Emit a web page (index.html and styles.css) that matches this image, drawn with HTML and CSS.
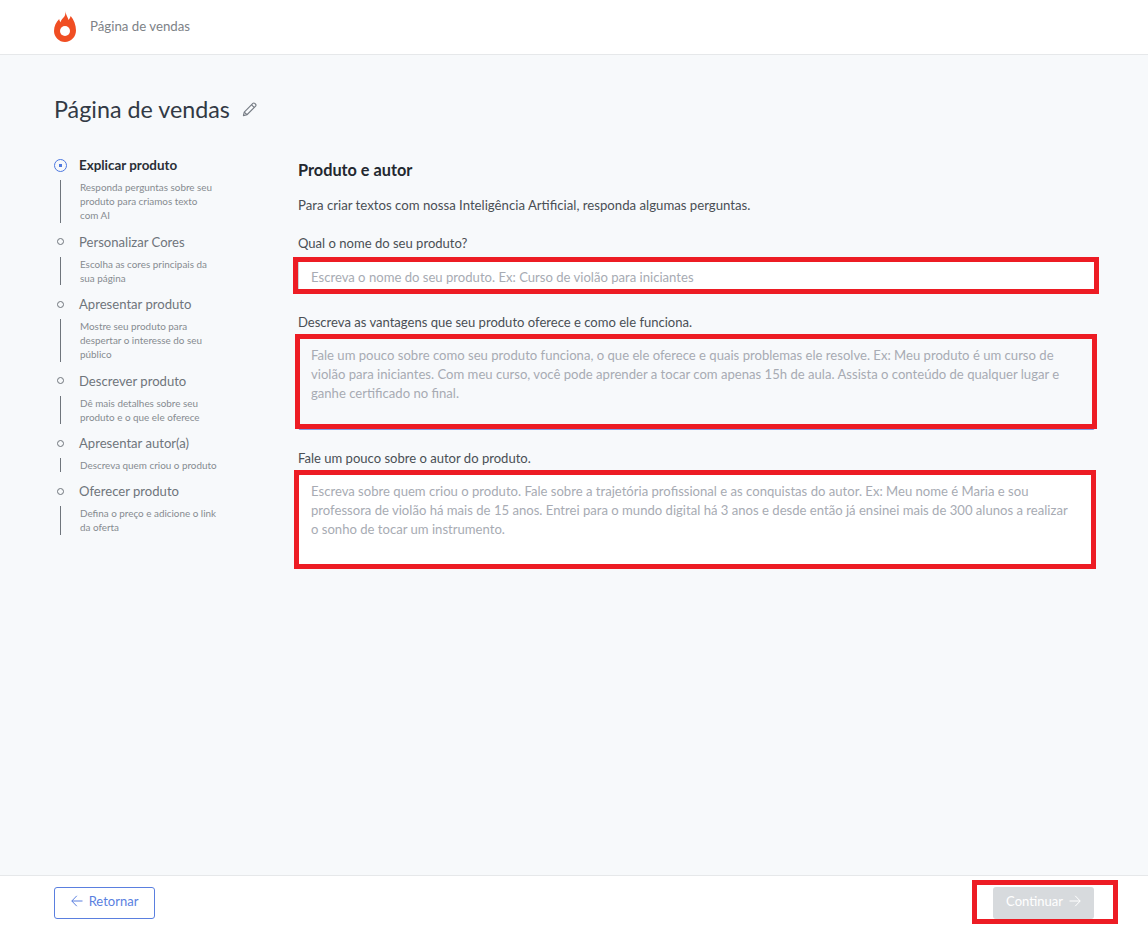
FILE: index.html
```html
<!DOCTYPE html>
<html lang="pt-BR">
<head>
<meta charset="utf-8">
<title>Página de vendas</title>
<link rel="stylesheet" href="styles.css">
</head>
<body>
<div class="page">
  <header class="topbar">
    <svg class="logo" viewBox="0 0 22 31" width="22" height="31" aria-hidden="true">
      <path fill="#f04e23" d="M11 0C12 3.500 13.800 6.500 14.600 9 15.600 7.800 16.400 6.400 16.700 5 19.800 8.600 22 13.800 22 19.600 22 26 17 31 11 31 5 31 0 26 0 20 0 15 2.200 11 5.200 8 5.400 9.400 5.800 10.400 6.400 11.200 7.200 8.600 9 7.500 10.400 5.600 11.400 4 11.600 2 11 0Z"/>
      <circle cx="11" cy="20" r="5" fill="#fff"/>
    </svg>
    <span class="topbar-title">Página de vendas</span>
  </header>

  <main class="main">
    <div class="title-row">
      <h1 class="title">Página de vendas</h1>
      <svg class="pencil" viewBox="0 0 16 16" width="15" height="15" fill="none" stroke="#767c84" stroke-width="1.200" stroke-linejoin="round" aria-hidden="true">
        <path d="M1.500 14.500l.9-3.800L11.600 1.500a1.400 1.400 0 0 1 2 0l.9.900a1.400 1.400 0 0 1 0 2L5.300 13.600z"/>
        <path d="M10.200 3l2.800 2.800M2.400 10.700l2.900 2.900"/>
      </svg>
    </div>

    <div class="columns">
      <ol class="steps">
        <li class="step step-active">
          <div class="step-head"><span class="dot"></span><span class="step-name">Explicar produto</span></div>
          <p class="step-desc">Responda perguntas sobre seu<br>produto para criamos texto<br>com AI</p>
        </li>
        <li class="step">
          <div class="step-head"><span class="dot"></span><span class="step-name">Personalizar Cores</span></div>
          <p class="step-desc">Escolha as cores principais da<br>sua página</p>
        </li>
        <li class="step">
          <div class="step-head"><span class="dot"></span><span class="step-name">Apresentar produto</span></div>
          <p class="step-desc">Mostre seu produto para<br>despertar o interesse do seu<br>público</p>
        </li>
        <li class="step">
          <div class="step-head"><span class="dot"></span><span class="step-name">Descrever produto</span></div>
          <p class="step-desc">Dê mais detalhes sobre seu<br>produto e o que ele oferece</p>
        </li>
        <li class="step">
          <div class="step-head"><span class="dot"></span><span class="step-name">Apresentar autor(a)</span></div>
          <p class="step-desc">Descreva quem criou o produto</p>
        </li>
        <li class="step">
          <div class="step-head"><span class="dot"></span><span class="step-name">Oferecer produto</span></div>
          <p class="step-desc">Defina o preço e adicione o link<br>da oferta</p>
        </li>
      </ol>

      <section class="form">
        <h2 class="form-title">Produto e autor</h2>
        <p class="form-intro">Para criar textos com nossa Inteligência Artificial, responda algumas perguntas.</p>

        <div class="field">
          <div class="label">Qual o nome do seu produto?</div>
          <div class="control control-input">Escreva o nome do seu produto. Ex: Curso de violão para iniciantes<span class="mark mark-name"></span></div>
        </div>

        <div class="field">
          <div class="label">Descreva as vantagens que seu produto oferece e como ele funciona.</div>
          <div class="control control-area control-focus">Fale um pouco sobre como seu produto funciona, o que ele oferece e quais problemas ele resolve. Ex: Meu produto é um curso de<br>violão para iniciantes. Com meu curso, você pode aprender a tocar com apenas 15h de aula. Assista o conteúdo de qualquer lugar e<br>ganhe certificado no final.<span class="mark mark-about"></span></div>
        </div>

        <div class="field">
          <div class="label">Fale um pouco sobre o autor do produto.</div>
          <div class="control control-area">Escreva sobre quem criou o produto. Fale sobre a trajetória profissional e as conquistas do autor. Ex: Meu nome é Maria e sou<br>professora de violão há mais de 15 anos. Entrei para o mundo digital há 3 anos e desde então já ensinei mais de 300 alunos a realizar<br>o sonho de tocar um instrumento.<span class="mark mark-author"></span></div>
        </div>
      </section>
    </div>
  </main>

  <footer class="bottombar">
    <button class="btn btn-back" type="button">
      <svg viewBox="0 0 12 12" width="12" height="12" fill="none" stroke="currentColor" stroke-width="1" aria-hidden="true"><path d="M11.500 6H.8M5.800 .8L.8 6l5 5.200"/></svg>
      <span>Retornar</span>
    </button>
    <button class="btn btn-next" type="button">
      <span>Continuar</span>
      <svg viewBox="0 0 12 12" width="12" height="12" fill="none" stroke="currentColor" stroke-width="1" aria-hidden="true"><path d="M.5 6h10.700M6.200 .8l5 5.200-5 5.200"/></svg>
      <span class="mark mark-next"></span>
    </button>
  </footer>
</div>
</body>
</html>
```

FILE: styles.css
```css
* { box-sizing: border-box; }
html, body { margin: 0; height: 100%; }
body {
  font-family: Lato, "Noto Sans", sans-serif;
  color: #343a40;
  background: #f7f9fb;
}
.page { display: flex; flex-direction: column; height: 926px; overflow: hidden; }

.topbar {
  flex: none;
  height: 55px;
  padding: 0 54px;
  display: flex;
  align-items: center;
  gap: 14px;
  background: #fff;
  border-bottom: 1px solid #e6e8ea;
}
.logo { display: block; margin-top: -1px; }
.topbar-title { font-size: 13.250px; color: #7d8287; margin-top: -2px; }

.main { flex: 1; padding: 0 54px; min-height: 0; }
.title-row { display: flex; align-items: center; gap: 12px; height: 40px; margin-top: 34px; }
.title { margin: 0; font-size: 23.300px; font-weight: 400; color: #323a45; }
.columns { display: grid; grid-template-columns: 244px 1fr; margin-top: 21px; }

.steps { list-style: none; margin: 0; padding: 0; }
.step { margin-bottom: 4px; }
.step-head { display: flex; align-items: center; height: 30px; gap: 12px; }
.dot {
  flex: none;
  width: 7px;
  height: 7px;
  margin: 0 3px;
  border: 1.300px solid #6f757c;
  border-radius: 50%;
}
.step-name { font-size: 13.100px; color: #6f757c; }
.step-desc {
  margin: 0 0 0 6px;
  padding-left: 19px;
  border-left: 1px solid #6f757c;
  font-size: 9.900px;
  line-height: 14.200px;
  color: #868b90;
  white-space: nowrap;
}
.step-active .step-name { font-size: 13.400px; font-weight: 700; color: #2b2f36; }
.step-active .dot {
  width: 13px;
  height: 13px;
  margin: 0;
  border: 1px solid #4d78e0;
  background: radial-gradient(circle, #4d78e0 0 1.500px, transparent 2px);
}

.form { min-width: 0; }
.form-title { margin: 10px 0 0; font-size: 16.300px; line-height: 20px; font-weight: 700; color: #23282f; }
.form-intro { margin: 15px 0 0; font-size: 13.200px; line-height: 20px; color: #4a4f55; }
.field { margin-top: 18px; }
.label { font-size: 13.050px; line-height: 20px; color: #4a4f55; }

.control {
  position: relative;
  margin-top: 6px;
  width: 797px;
  padding: 0 12px;
  font-size: 13.100px;
  line-height: 19px;
  color: #a7abb3;
  background: #fff;
  border: 1px solid #cfd3d7;
  border-radius: 2px;
  white-space: nowrap;
}
.control-input { height: 35px; padding-top: 2px; display: flex; align-items: center; }
.control-area { height: 92px; padding-top: 7px; }
.control-focus { background: #f7f9fb; border-color: #7f9ae6; }

.mark { position: absolute; border: 5px solid #ed1c24; pointer-events: none; }
.mark-name { left: -6px; top: -3px; width: 806px; height: 37px; }
.mark-about { left: -4px; top: -5px; width: 802px; height: 95px; }
.mark-author { left: -5px; top: -5px; width: 802px; height: 99px; }
.mark-next { right: -24px; top: -7px; width: 146px; height: 44px; }

.bottombar {
  flex: none;
  height: 51px;
  padding: 11px 54px 0;
  display: flex;
  align-items: flex-start;
  justify-content: space-between;
  background: #fff;
  border-top: 1px solid #e6e8ea;
}
.btn {
  position: relative;
  display: flex;
  align-items: center;
  justify-content: center;
  gap: 6px;
  width: 101px;
  height: 32px;
  padding: 0 0 4px;
  font: inherit;
  font-size: 13px;
  border-radius: 3px;
}
.btn-back { background: #fff; color: #5a7fdf; border: 1px solid #5a7fdf; }
.btn-next { background: #d7dadd; color: #fff; border: 0; }
```
